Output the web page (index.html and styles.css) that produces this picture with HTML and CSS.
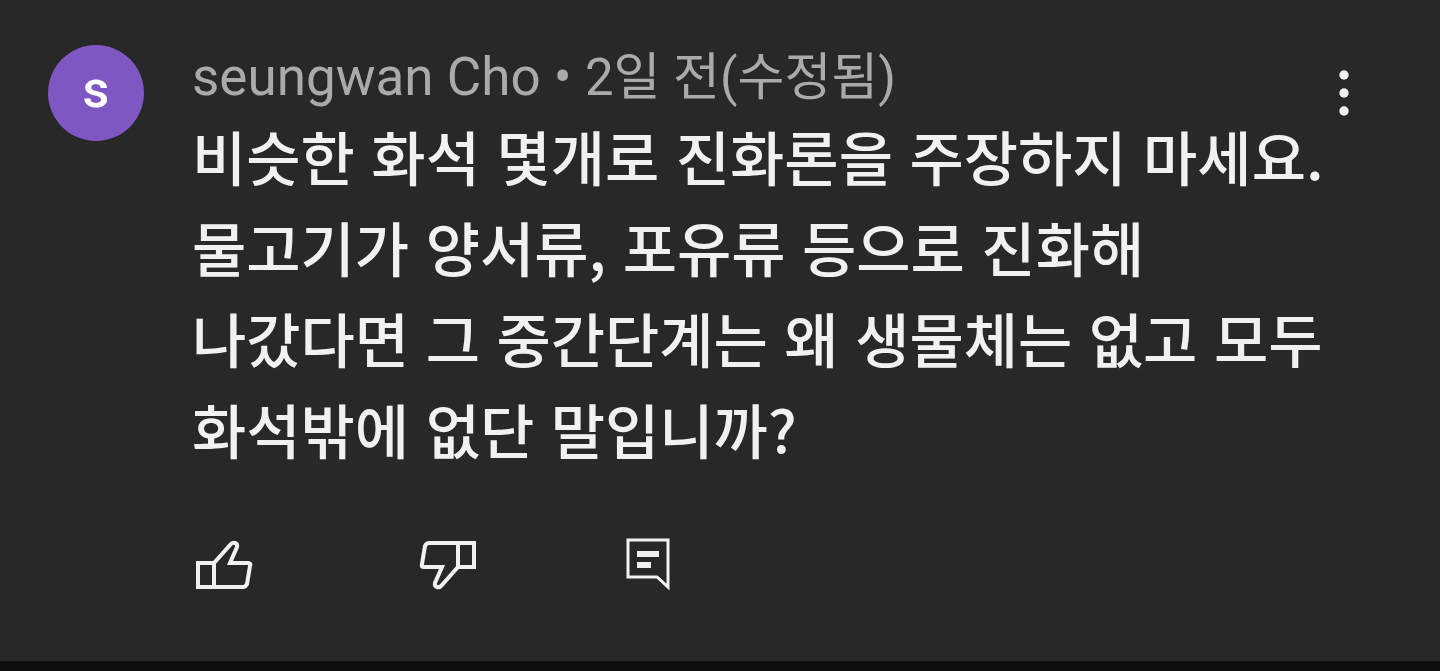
FILE: index.html
```
<!DOCTYPE html>
<html lang="ko">
<head>
  <meta charset="utf-8">
  <title>댓글</title>
  <meta name="viewport" content="width=device-width, initial-scale=1">
  <link rel="stylesheet" href="styles.css">
</head>
<body>
  <article class="comment">
    <div class="avatar">s</div>

    <div class="content">
      <div class="meta">seungwan Cho • <span class="date">2일 전(수정됨)</span></div>
      <p class="text">비슷한 화석 몇개로 진화론을 주장하지 마세요. 물고기가 양서류, 포유류 등으로 진화해 나갔다면 그 중간단계는 왜 생물체는 없고 모두 화석밖에 없단 말입니까?</p>

      <div class="actions">
        <button type="button" class="like" aria-label="좋아요">
          <svg width="64" height="56" viewBox="0 0 64 56" stroke-width="4">
            <path d="M6 27H22L38 9C41 5 46 7 45 11L38 27H56C58 27 59 28 58 30L55 48C54 50 53 51 51 51H6ZM22 27V51"/>
          </svg>
        </button>
        <button type="button" aria-label="싫어요">
          <svg width="64" height="56" viewBox="0 0 64 56" stroke-width="4">
            <path transform="rotate(180 32 29)" d="M6 27H22L38 9C41 5 46 7 45 11L38 27H56C58 27 59 28 58 30L55 48C54 50 53 51 51 51H6ZM22 27V51"/>
          </svg>
        </button>
        <button type="button" aria-label="답글">
          <svg width="48" height="56" viewBox="0 0 48 56" stroke-width="3">
            <path d="M4 4H44V51L33 41H4Z"/>
            <path d="M13 18H35M13 29H27" stroke-width="6"/>
          </svg>
        </button>
      </div>
    </div>

    <button type="button" class="menu" aria-label="작업 메뉴">
      <svg width="32" height="56" viewBox="0 0 32 56">
        <circle cx="16" cy="10" r="4.7"/>
        <circle cx="16" cy="28" r="4.7"/>
        <circle cx="16" cy="46" r="4.7"/>
      </svg>
    </button>
  </article>
</body>
</html>
```
FILE: styles.css
```
* {
  box-sizing: border-box;
}
body {
  margin: 0;
  background-color: #0f0f0f;
  color: #f1f1f1;
  font-family: Roboto, "Noto Sans CJK KR", sans-serif;
}
.comment {
  display: flex;
  align-items: flex-start;
  padding: 45px 80px 69px 48px;
  background-color: #282828;
}
.avatar {
  flex: none;
  width: 96px;
  height: 96px;
  margin-right: 48px;
  border-radius: 50%;
  background-color: #7e57c2;
  color: #fff;
  font-size: 52px;
  font-weight: 500;
  line-height: 90px;
  text-align: center;
}
.content {
  flex: 1;
  min-width: 0;
}
.meta {
  color: #aaa;
  font-size: 53px;
  line-height: 64px;
}
.date {
  font-size: 51px;
}
.text {
  margin: 0;
  font-family: "Noto Sans CJK KR", sans-serif;
  font-size: 59px;
  font-weight: 500;
  line-height: 91px;
  word-break: keep-all;
}
.actions {
  display: flex;
  gap: 144px;
  margin-top: 62px;
}
button {
  display: block;
  padding: 0;
  border: none;
  background: none;
  color: #f1f1f1;
  cursor: pointer;
}
button svg {
  display: block;
}
.actions svg {
  fill: none;
  stroke: currentColor;
}
.like {
  width: 80px;
}
.menu {
  flex: none;
  margin: 20px 0 0 -8px;
}
.menu svg {
  fill: currentColor;
}
```
